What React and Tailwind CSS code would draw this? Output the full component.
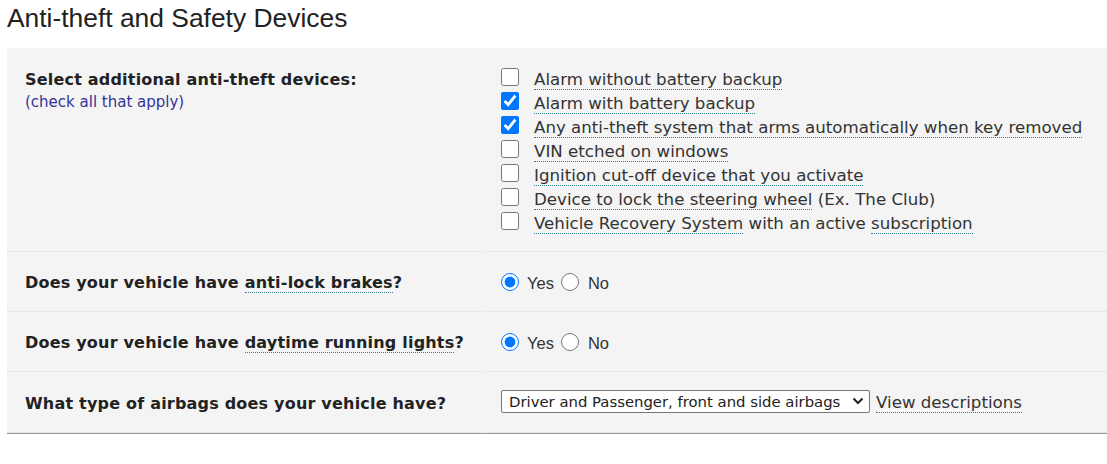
import { useState } from 'react';

const verdana = { fontFamily: '"DejaVu Sans", Verdana, sans-serif' };
const arial = { fontFamily: '"Liberation Sans", Arial, sans-serif' };

const devices = [
  { id: 'alarm-no-backup', parts: [['Alarm without battery backup', true]], checked: false },
  { id: 'alarm-backup', parts: [['Alarm with battery backup', true]], checked: true },
  { id: 'auto-arm', parts: [['Any anti-theft system that arms automatically when key removed', true]], checked: true },
  { id: 'vin', parts: [['VIN etched on windows', true]], checked: false },
  { id: 'ignition', parts: [['Ignition cut-off device that you activate', true]], checked: false },
  { id: 'steering', parts: [['Device to lock the steering wheel', true], [' (Ex. The Club)', false]], checked: false },
  { id: 'recovery', parts: [['Vehicle Recovery System', true], [' with an active ', false], ['subscription', true]], checked: false },
];

function Dotted({ children }) {
  return <span className="border-b border-dotted border-[#2e7f8f]">{children}</span>;
}

function Row({ label, children, className = '' }) {
  return (
    <div className="grid grid-cols-[476px_1fr] gap-x-[4px]">
      <div className={`border-b border-[#e6e6e6] pl-[18px] ${className}`}>{label}</div>
      <div className={`border-b border-[#e6e6e6] pl-[14px] ${className}`}>{children}</div>
    </div>
  );
}

function YesNo({ name }) {
  const [val, setVal] = useState('yes');
  return (
    <div className="flex items-center text-[16.5px] text-[#333]" style={arial}>
      <input type="radio" name={name} checked={val === 'yes'} onChange={() => setVal('yes')} className="m-0 w-[18px] h-[18px] accent-[#0075ff]" />
      <span className="ml-[8px] mr-[7px] pt-[3px]">Yes</span>
      <input type="radio" name={name} checked={val === 'no'} onChange={() => setVal('no')} className="m-0 w-[18px] h-[18px] accent-[#0075ff]" />
      <span className="ml-[9px] pt-[3px]">No</span>
    </div>
  );
}

export default function App() {
  const [checks, setChecks] = useState(() => Object.fromEntries(devices.map((d) => [d.id, d.checked])));

  return (
    <div className="bg-white w-[1107px] h-[464px] pl-[7px]" style={verdana}>
      <h2 className="text-[26.4px] leading-[34px] text-[#222] pt-[1px] pb-[13px]" style={arial}>
        Anti-theft and Safety Devices
      </h2>

      <div className="bg-[#f4f4f4] border-b border-[#999]">
        <Row label={
          <div className="pt-[20px]">
            <p className="text-[16px] tracking-[0.2px] leading-[24px] font-bold text-[#222]">Select additional anti-theft devices:</p>
            <p className="text-[15px] leading-[20px] text-[#333399]">(check all that apply)</p>
          </div>
        }>
          <div className="pt-[19px] pb-[16px]">
            {devices.map((d) => (
              <label key={d.id} className="flex items-center h-[24px] text-[16.65px] text-[#333]">
                <input
                  type="checkbox"
                  checked={checks[d.id]}
                  onChange={() => setChecks((c) => ({ ...c, [d.id]: !c[d.id] }))}
                  className="m-0 -mt-[5px] w-[18px] h-[18px] accent-[#0075ff]"
                />
                <span className="ml-[15px] pt-[3px] whitespace-nowrap">
                  {d.parts.map(([t, u], i) => (u ? <Dotted key={i}>{t}</Dotted> : <span key={i}>{t}</span>))}
                </span>
              </label>
            ))}
          </div>
        </Row>

        <Row className="h-[60px] flex items-center" label={
          <p className="pt-[3px] text-[16px] tracking-[0.2px] font-bold text-[#222]">Does your vehicle have <Dotted>anti-lock brakes</Dotted>?</p>
        }>
          <YesNo name="abs" />
        </Row>

        <Row className="h-[60px] flex items-center" label={
          <p className="pt-[3px] text-[16px] tracking-[0.2px] font-bold text-[#222]">Does your vehicle have <Dotted>daytime running lights</Dotted>?</p>
        }>
          <YesNo name="drl" />
        </Row>

        <Row className="h-[61px] flex items-center" label={
          <p className="pt-[3px] text-[16px] tracking-[0.2px] font-bold text-[#222]">What type of airbags does your vehicle have?</p>
        }>
          <div className="flex items-center">
            <div className="relative">
              <select className="appearance-none bg-white border border-[#767676] rounded-[2px] h-[23px] pl-[7px] pr-[28px] text-[14.85px] text-[#222] outline-none" defaultValue="df">
                <option value="d">Driver only</option>
                <option value="dp">Driver and Passenger, front airbags</option>
                <option value="df">Driver and Passenger, front and side airbags</option>
              </select>
              <svg className="absolute right-[6px] top-[7px] pointer-events-none" width="12" height="9" viewBox="0 0 12 9">
                <path d="M1.5 1.5 L6 6 L10.5 1.5" fill="none" stroke="#222" strokeWidth="2" />
              </svg>
            </div>
            <span className="ml-[6px] pt-[3px] text-[16.65px] text-[#333]"><Dotted>View descriptions</Dotted></span>
          </div>
        </Row>
      </div>
    </div>
  );
}
